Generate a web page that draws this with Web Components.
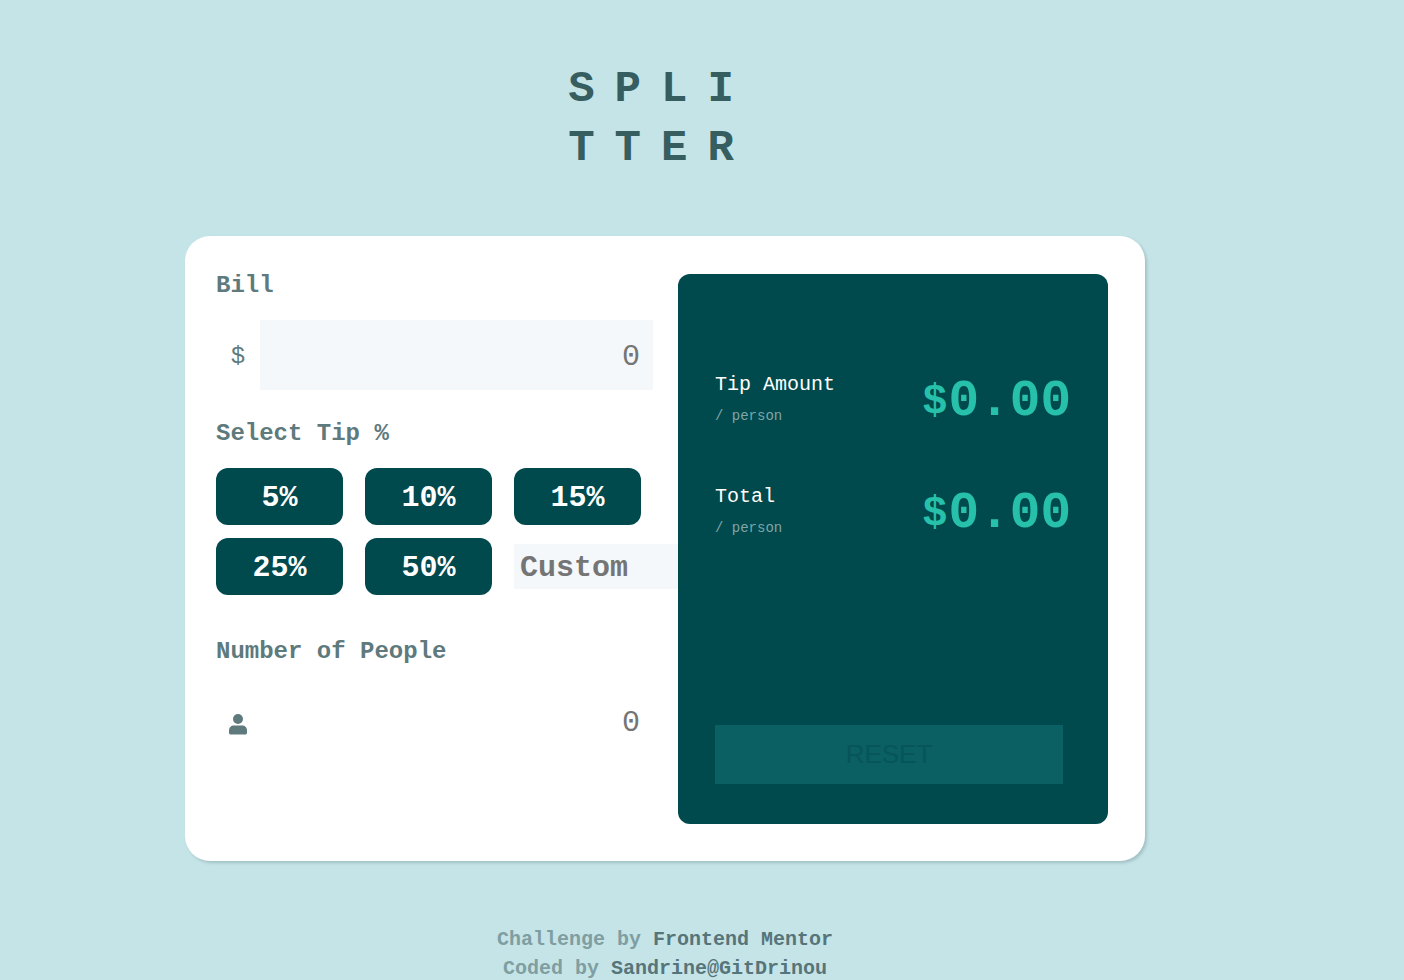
<!DOCTYPE html>
<html lang="en">
<head>
<meta charset="utf-8">
<meta name="viewport" content="width=device-width, initial-scale=1">
<title>Splitter</title>
<style>
  body {
    margin: 0;
    background: #c5e4e7;
    font-family: "Liberation Mono", monospace;
    --dark: #00494d;
    --accent: #26c0ab;
    --label: #5e7a7d;
    --field: #f4f8fb;
  }
</style>
</head>
<body>
<splitter-page></splitter-page>
<script>
const define = (name, html, setup) => {
  const template = document.createElement('template');
  template.innerHTML = html;
  customElements.define(name, class extends HTMLElement {
    constructor() {
      super();
      this.attachShadow({ mode: 'open' }).append(template.content.cloneNode(true));
    }
  });
};

/* Labelled number field with an icon on its left */
define('number-field', `
  <style>
    :host { display: block; }
    label { display: block; font-size: 24px; line-height: 36px; font-weight: 700; color: var(--label); margin-bottom: 16px; }
    .row { display: flex; align-items: center; height: 70px; }
    .icon { flex: 0 0 44px; display: flex; justify-content: center; padding-top: 4px; font-size: 24px; line-height: 36px; color: var(--label); }
    input {
      flex: 1; min-width: 0; height: 100%; box-sizing: border-box; border: 0; border-radius: 0;
      padding: 4px 13px 0 12px; background: var(--field-background, var(--field));
      font: 30px "Liberation Mono", monospace; text-align: right; color: var(--dark);
    }
    input::placeholder { color: #757575; opacity: 1; }
  </style>
  <label for="value"><slot></slot></label>
  <div class="row">
    <span class="icon"><slot name="icon"></slot></span>
    <input id="value" type="text" inputmode="decimal" placeholder="0">
  </div>`);

define('tip-button', `
  <style>
    :host { display: block; }
    button {
      width: 100%; height: 57px; padding: 2px 0 0; border: 0; border-radius: 12px; background: var(--dark);
      color: #fff; font: 700 30px "Liberation Mono", monospace; cursor: pointer;
    }
  </style>
  <button type="button"><slot></slot></button>`);

define('tip-picker', `
  <style>
    :host { display: block; }
    fieldset { border: 0; margin: 0; padding: 0; min-width: 0; }
    legend { padding: 0; font-size: 24px; line-height: 36px; font-weight: 700; color: var(--label); margin-bottom: 16px; }
    .grid { display: grid; grid-template-columns: repeat(3, minmax(0, 127px)); gap: 13px 22px; align-items: center; }
    input {
      width: 176px; height: 45px; box-sizing: border-box; border: 0; border-radius: 0; padding: 2px 6px 0;
      background: var(--field); font: 700 30px "Liberation Mono", monospace; color: var(--dark);
    }
    input::placeholder { color: #757575; opacity: 1; }
    @media (max-width: 860px) { input { width: 100%; } }
  </style>
  <fieldset>
    <legend>Select Tip %</legend>
    <div class="grid">
      <tip-button>5%</tip-button>
      <tip-button>10%</tip-button>
      <tip-button>15%</tip-button>
      <tip-button>25%</tip-button>
      <tip-button>50%</tip-button>
      <input type="text" inputmode="numeric" placeholder="Custom" aria-label="Custom tip">
    </div>
  </fieldset>`);

define('amount-row', `
  <style>
    :host { display: flex; align-items: flex-start; justify-content: space-between; height: 62px; }
    p { margin: 0; }
    .name { font-size: 20px; line-height: 30px; color: #fff; }
    .per { font-size: 14px; line-height: 32px; color: #7fa5a7; }
    .amount { display: flex; align-items: center; font-weight: 700; font-size: 51px; line-height: 64px; color: var(--accent); }
    .sign { font-size: 42px; margin-right: 1px; }
  </style>
  <div>
    <p class="name"><slot></slot></p>
    <p class="per">/ person</p>
  </div>
  <div class="amount"><span class="sign">$</span><span>0.00</span></div>`);

define('result-panel', `
  <style>
    :host {
      display: flex; flex-direction: column; gap: 50px; box-sizing: border-box; min-height: 550px;
      position: relative; z-index: 1; padding: 96px 37px 40px; border-radius: 12px; background: var(--dark);
    }
    button {
      margin: auto 8px 0 0; height: 59px; padding: 0; border: 0; background: #0a6062;
      color: #07555a; font: 26px "Liberation Sans", Arial, sans-serif;
    }
  </style>
  <amount-row>Tip Amount</amount-row>
  <amount-row>Total</amount-row>
  <button type="button" disabled>RESET</button>`);

define('calculator-card', `
  <style>
    :host {
      display: grid; grid-template-columns: 437fr 430fr; gap: 25px; box-sizing: border-box;
      width: 100%; max-width: 960px; padding: 32px 37px 37px 31px; border-radius: 25px;
      background: #fff; box-shadow: 2px 2px 3px rgba(60, 90, 95, .25);
    }
    .inputs { min-width: 0; }
    tip-picker { margin: 26px 0 39px; }
    result-panel { margin-top: 6px; }
    .people { --field-background: transparent; }
    svg { display: block; margin-top: 2px; }
    @media (max-width: 860px) { :host { grid-template-columns: 1fr; } }
  </style>
  <div class="inputs">
    <number-field>Bill<span slot="icon">$</span></number-field>
    <tip-picker></tip-picker>
    <number-field class="people">Number of People
      <svg slot="icon" width="18" height="21" viewBox="0 0 18 21" fill="currentColor" aria-hidden="true">
        <circle cx="9" cy="5" r="5"/>
        <path d="M5 11.500h8c3 0 5 2 5 5v2c0 1.400-.8 2-2 2H2c-1.200 0-2-.6-2-2v-2c0-3 2-5 5-5z"/>
      </svg>
    </number-field>
  </div>
  <result-panel></result-panel>`);

define('page-footer', `
  <style>
    :host { display: block; text-align: center; font-size: 20px; line-height: 29px; font-weight: 700; color: #7f9ea1; }
    p { margin: 0; }
    a { color: #56757a; text-decoration: none; }
  </style>
  <p>Challenge by <a href="#challenge">Frontend Mentor</a></p>
  <p>Coded by <a href="#author">Sandrine@GitDrinou</a></p>`);

define('splitter-page', `
  <style>
    :host { display: flex; flex-direction: column; align-items: center; padding: 60px 74px 0 0; }
    h1 {
      margin: 0 0 58px; padding-right: 8px; font-size: 44px; line-height: 59px; font-weight: 700;
      letter-spacing: 20px; color: #365d60;
    }
    page-footer { margin-top: 64px; }
    @media (max-width: 1034px) { :host { padding-right: 0; } }
  </style>
  <h1>SPLI<br>TTER</h1>
  <calculator-card></calculator-card>
  <page-footer></page-footer>`);
</script>
</body>
</html>
